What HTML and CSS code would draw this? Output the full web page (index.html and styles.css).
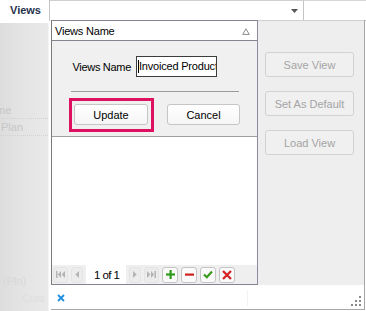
FILE: index.html
```html
<!DOCTYPE html>
<html>
<head>
<meta charset="utf-8">
<link rel="stylesheet" href="styles.css">
</head>
<body>
<div class="app">
  <div class="leftcol">
    <div class="tab">Views</div>
    <div class="list">
      <div class="item item-name">Name</div>
      <div class="item">Plan</div>
      <div class="list-spacer"></div>
      <div class="item faint item-pln">(Pln)</div>
      <div class="item faint item-cust">Cust</div>
    </div>
  </div>
  <div class="rightcol">
    <div class="toprow">
      <div class="combo">
        <svg class="combo-arrow" width="7" height="4" viewBox="0 0 7 4"><polygon points="0,0 7,0 3.5,4" fill="#555"/></svg>
      </div>
      <div class="topfill"></div>
    </div>
  </div>

  <div class="popup">
    <div class="popmain">
      <div class="grid">
        <div class="ghead">
          <span>Views Name</span>
          <svg width="8" height="7" viewBox="0 0 8 7"><polygon points="4,0.8 7.3,6.4 0.7,6.4" fill="none" stroke="#8c8c8c" stroke-width="1"/></svg>
        </div>
        <div class="form">
          <div class="frow">
            <label class="flabel">Views Name</label>
            <div class="input"><span class="caret"></span>Invoiced Product</div>
          </div>
          <div class="sep"></div>
          <div class="brow">
            <div class="hl-wrap">
              <button class="btn btn-update">Update</button>
              <span class="highlight"></span>
            </div>
            <button class="btn btn-cancel">Cancel</button>
          </div>
        </div>
        <div class="gbody"></div>
        <div class="pager">
          <span class="pbtn dis">
            <svg width="9" height="7" viewBox="0 0 9 7"><rect x="0" y="0" width="1.5" height="7" fill="#b4b4b4"/><polygon points="5,0 5,7 1.8,3.5" fill="#b4b4b4"/><polygon points="9,0 9,7 5.6,3.5" fill="#b4b4b4"/></svg>
          </span>
          <span class="pbtn dis narrow">
            <svg width="4" height="7" viewBox="0 0 4 7"><polygon points="4,0 4,7 0.3,3.5" fill="#b4b4b4"/></svg>
          </span>
          <span class="pinfo">1 of 1</span>
          <span class="pbtn dis narrow">
            <svg width="4" height="7" viewBox="0 0 4 7"><polygon points="0,0 0,7 3.7,3.5" fill="#b4b4b4"/></svg>
          </span>
          <span class="pbtn dis">
            <svg width="9" height="7" viewBox="0 0 9 7"><polygon points="0,0 0,7 3.4,3.5" fill="#b4b4b4"/><polygon points="4,0 4,7 7.2,3.5" fill="#b4b4b4"/><rect x="7.5" y="0" width="1.5" height="7" fill="#b4b4b4"/></svg>
          </span>
          <span class="pbtn act">
            <svg width="9" height="9" viewBox="0 0 9 9"><rect x="3.5" y="0" width="2.2" height="9" fill="#2f9a1c"/><rect x="0" y="3.4" width="9" height="2.2" fill="#2f9a1c"/></svg>
          </span>
          <span class="pbtn act">
            <svg width="9" height="9" viewBox="0 0 9 9"><rect x="0" y="3.5" width="9" height="2.2" fill="#d02020"/></svg>
          </span>
          <span class="pbtn act">
            <svg width="10" height="9" viewBox="0 0 10 9"><polyline points="1,4.5 3.8,7.2 9,1.5" fill="none" stroke="#3a9a1a" stroke-width="2.2"/></svg>
          </span>
          <span class="pbtn act">
            <svg width="10" height="10" viewBox="0 0 10 10"><path d="M1 1 L9 9 M9 1 L1 9" stroke="#d42424" stroke-width="2.3"/></svg>
          </span>
        </div>
      </div>
      <div class="side">
        <button class="sbtn">Save View</button>
        <button class="sbtn">Set As Default</button>
        <button class="sbtn">Load View</button>
      </div>
    </div>
    <div class="popfoot">
      <svg width="8" height="8" viewBox="0 0 8 8"><path d="M1 1 L7 7 M7 1 L1 7" stroke="#1e8ee0" stroke-width="1.8"/></svg>
      <span class="foot-sep"></span>
      <svg class="grip" width="11" height="11" viewBox="0 0 11 11">
        <g fill="#8a8a8a">
          <rect x="8" y="0" width="2" height="2"/>
          <rect x="4" y="4" width="2" height="2"/><rect x="8" y="4" width="2" height="2"/>
          <rect x="0" y="8" width="2" height="2"/><rect x="4" y="8" width="2" height="2"/><rect x="8" y="8" width="2" height="2"/>
        </g>
      </svg>
    </div>
  </div>
</div>
</body>
</html>
```

FILE: styles.css
```css
* { box-sizing: border-box; }
html, body {
  margin: 0;
  padding: 0;
  background: #ffffff;
}
body {
  font-family: "Liberation Sans", Arial, sans-serif;
  font-size: 11px;
  color: #000;
}
.app {
  position: relative;
  width: 366px;
  height: 311px;
  display: flex;
  overflow: hidden;
}
.leftcol {
  width: 49px;
  display: flex;
  flex-direction: column;
}
.tab {
  height: 23px;
  background: #fff;
  font-weight: bold;
  color: #26334d;
  padding-left: 10px;
  line-height: 20px;
}
.list {
  flex: 1;
  display: flex;
  flex-direction: column;
  background: linear-gradient(90deg, #dddddd 0%, #e3e3e3 40%, #e9e9e9 100%);
  border-right: 1px solid #f4f4f4;
  overflow: hidden;
  padding-top: 79px;
}
.item {
  height: 17px;
  line-height: 16px;
  color: #c6c6c6;
  white-space: nowrap;
  border-bottom: 1px dotted #d2d2d2;
  padding-left: 1px;
}
.item-name { margin-left: -19px; }
.list-spacer { flex: 1; }
.faint { color: #d8d8d8; border-bottom: none; }
.item-pln { margin-left: 2px; }
.item-cust { padding-left: 22px; margin-bottom: 4px; color: #dedede; }

.rightcol {
  flex: 1;
  display: flex;
  flex-direction: column;
}
.toprow {
  height: 21px;
  display: flex;
}
.combo {
  width: 254px;
  border-top: 1px solid #d0d0d0;
  border-left: 1px solid #c4c4c4;
  display: flex;
  justify-content: flex-end;
  align-items: flex-start;
  padding-right: 5px;
  padding-top: 8px;
  background: #fff;
}
.topfill {
  flex: 1;
  border-left: 1px solid #c4c4c4;
  border-bottom: 1px solid #c4c4c4;
  border-top: 1px solid #d8d8d8;
}

/* popup overlay */
.popup {
  position: absolute;
  left: 51px;
  top: 20px;
  width: 314px;
  height: 290px;
  display: flex;
  flex-direction: column;
  border-right: 1px solid #a6a6a6;
  background: #fff;
}
.popmain {
  height: 265px;
  display: flex;
}
.grid {
  width: 207px;
  display: flex;
  flex-direction: column;
  border: 1px solid #82858e;
  border-left-color: #7a7a7a;
  border-right-color: #8c8aa2;
}
.ghead {
  height: 20px;
  border-bottom: 1px solid #82858e;
  background: #fff;
  display: flex;
  align-items: center;
  justify-content: space-between;
  padding: 0 7px 0 3px;
  font-size: 11px;
  letter-spacing: -0.2px;
}
.ghead svg { margin-top: 1px; }
.form {
  height: 96px;
  background: #f0f0f0;
  border-bottom: 1px solid #a0a0a0;
  padding-top: 15px;
}
.frow {
  display: grid;
  grid-template-columns: 84px 81px;
  height: 21px;
  align-items: center;
}
.flabel {
  text-align: right;
  padding-right: 5px;
  font-size: 11px;
  letter-spacing: -0.3px;
}
.input {
  height: 21px;
  border: 1px solid #3c3c3c;
  background: #fff;
  white-space: nowrap;
  overflow: hidden;
  line-height: 19px;
  padding-left: 1px;
  font-size: 11px;
  letter-spacing: -0.2px;
  display: flex;
  align-items: center;
}
.caret {
  width: 1px;
  height: 13px;
  background: #000;
  flex: none;
}
.sep {
  height: 1px;
  background: #9c9c9c;
  margin: 14px 18px 0 19px;
}
.brow {
  display: flex;
  margin-top: 12px;
  padding-left: 22px;
  gap: 19px;
}
.hl-wrap {
  position: relative;
  display: flex;
}
.btn {
  height: 21px;
  border: 1px solid #c6c6c6;
  border-radius: 3px;
  background: linear-gradient(#ffffff, #f6f6f6);
  font-family: "Liberation Sans", Arial, sans-serif;
  font-size: 11px;
  color: #000;
  padding: 0;
}
.btn-update { width: 74px; }
.btn-cancel { width: 73px; }
.highlight {
  position: absolute;
  left: -5px;
  top: -6px;
  right: -6px;
  bottom: -7px;
  border: 3px solid #de1060;
  pointer-events: none;
}
.gbody {
  flex: 1;
  background: #fff;
}
.pager {
  height: 19px;
  background: #efefef;
  display: flex;
  align-items: center;
  padding-left: 1px;
  gap: 3px;
}
.pbtn {
  width: 15px;
  height: 16px;
  border-radius: 3px;
  display: flex;
  align-items: center;
  justify-content: center;
  flex: none;
}
.pbtn.narrow { width: 12px; }
.pbtn.dis {
  background: #ececec;
  border: 1px solid #e4e4e4;
}
.pbtn.act {
  width: 16px;
  background: #fafafa;
  border: 1px solid #c4c4c4;
}
.pinfo {
  height: 19px;
  background: #fff;
  display: flex;
  align-items: center;
  padding: 0 7px 0 8px;
  font-size: 11.5px;
  letter-spacing: -0.6px;
}
.side {
  width: 106px;
  background: #eeeeee;
  border-top: 1px solid #d0d0d0;
  display: flex;
  flex-direction: column;
  align-items: flex-start;
  padding: 31px 0 0 7px;
  gap: 14px;
}
.sbtn {
  width: 89px;
  height: 25px;
  border: 1px solid #d2d2d2;
  border-radius: 3px;
  background: #f0f0f0;
  color: #a4a4a4;
  font-family: "Liberation Sans", Arial, sans-serif;
  font-size: 11px;
  padding: 0;
}
.popfoot {
  flex: 1;
  background: #fff;
  border-bottom: 1px solid #a8a8a8;
  display: flex;
  align-items: center;
  padding: 1px 0 0 6px;
  position: relative;
}
.foot-sep {
  width: 1px;
  height: 16px;
  background: #f2f2f2;
  margin-left: 182px;
}
.grip {
  margin-left: auto;
  margin-right: 2px;
  margin-top: 8px;
}
```
